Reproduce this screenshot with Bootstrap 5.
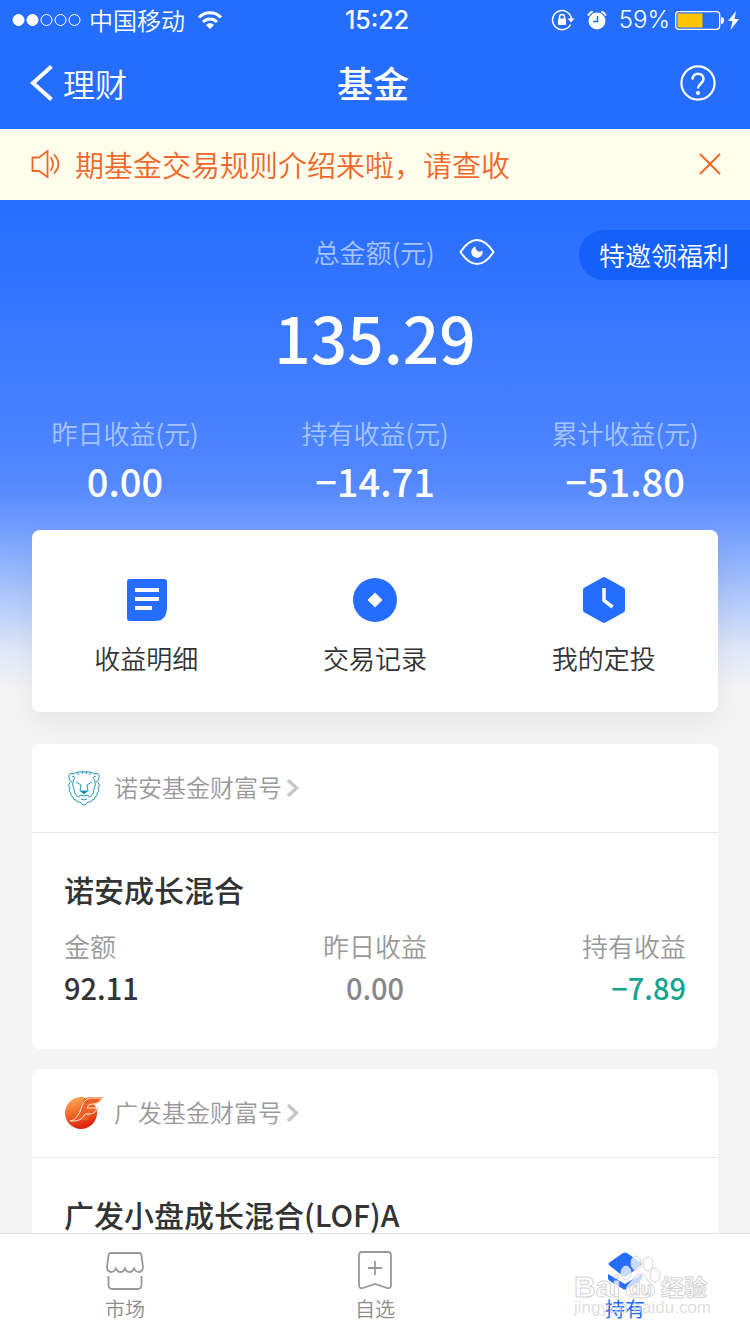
<!DOCTYPE html>
<html lang="zh-CN">
<head>
<meta charset="utf-8">
<meta name="viewport" content="width=device-width, initial-scale=1">
<title>基金</title>
<link href="https://cdn.jsdelivr.net/npm/bootstrap@5.3.0/dist/css/bootstrap.min.css" rel="stylesheet">
<style>
  :root { --brand: #256dff; --ink: #333; --muted: #999; --notice: #f0692a; }
  body { font-family: "Noto Sans CJK SC", sans-serif; font-size: 26px; line-height: 36px; color: var(--ink); background: #f4f4f4; }
  button { font-family: inherit; }
  a { text-decoration: none; color: inherit; }
  svg { display: block; flex: none; }
  .bg-brand { background: var(--brand); }
  .light-face { font-weight: 350; }
  .status-bar { height: 40px; font-size: 24px; }
  .status-bar .clock, .status-bar .charge { font-family: Inter, sans-serif; }
  .status-bar .clock { font-size: 25px; }
  .side { flex: 1 1 0; }
  .title-bar { height: 89px; padding: 0 33px 4px 29px; }
  .title-bar .back { font-size: 32px; }
  .title-bar h1 { font-size: 36px; font-weight: 500; }
  .notice { height: 71px; padding: 0 28px 2px 31px; background: #fffdec; color: var(--notice); font-size: 29px; }
  .scroller { scrollbar-width: none; background: linear-gradient(#266eff 0, #3475ff 100px, #447fff 200px, #5287ff 280px, #6c99ff 320px, #a9c3fb 390px, #dfe7f8 450px, #f4f4f4 490px) no-repeat; }
  .scroller::-webkit-scrollbar { display: none; }
  .total { padding: 34px 0 0 58px; }
  .dim { color: #a6c4ff; }
  .invite { top: 30px; right: 0; height: 50px; padding: 0 21px 0 20px; border-radius: 25px 0 0 25px; background: #1560fb; font-size: 26px; line-height: 46px; }
  .amount { font-size: 64px; line-height: 72px; font-weight: 500; margin-top: 30px; }
  .stats { padding-top: 43px; }
  .stats dd { font-size: 38px; line-height: 44px; font-weight: 500; margin-top: 8px; }
  .panel { background: #fff; border-radius: 8px; margin: 0 32px 20px; }
  .shortcuts { margin-top: 27px; margin-bottom: 32px; padding: 44px 0 34px; box-shadow: 0 10px 30px rgba(0,0,0,.06); }
  .shortcuts a { gap: 14px; padding-bottom: 2px; }
  .fund-head { height: 89px; padding: 0 32px; border-bottom: 1px solid #e8e8e8; font-size: 24px; line-height: 30px; color: var(--muted); }
  .fund-head span { padding: 0 0 2px 2px; }
  .fund-body { padding: 36px 32px 42px; }
  .fund-body h2 { font-size: 30px; line-height: 40px; font-weight: 500; }
  .fund-body dt { color: var(--muted); margin-top: 19px; }
  .fund-body dd { font-size: 29px; line-height: 40px; font-weight: 500; margin-top: 3px; }
  .flat { color: #888; }
  .loss { color: #15a48b; }
  .tab-bar { height: 101px; background: #fff; border-top: 1px solid #e2e2e2; font-size: 20px; line-height: 26px; color: #8c8c8c; }
  .tab-bar a { padding-top: 16px; gap: 6px; }
  .tab-bar .current { color: var(--brand); }
  .stamp { right: 36px; top: 16px; width: 140px; pointer-events: none; }
</style>
</head>
<body>
<div class="d-flex flex-column vh-100 overflow-hidden">
  <header class="bg-brand text-white flex-shrink-0">
    <div class="status-bar d-flex align-items-center ps-2 pe-2">
      <div class="side d-flex align-items-center gap-2 ps-1">
        <svg width="69" height="14" viewBox="0 0 69 14" fill="none" stroke="#fff"><g fill="#fff"><circle cx="6.500" cy="7" r="5.500"/><circle cx="20.500" cy="7" r="5.500"/></g><circle cx="34.500" cy="7" r="5.500"/><circle cx="48.500" cy="7" r="5.500"/><circle cx="62.500" cy="7" r="5.500"/></svg>
        <span class="light-face">中国移动</span>
        <svg class="ms-1" width="26" height="20" viewBox="0 0 26 20" fill="none" stroke="#fff" stroke-width="3"><path d="M2 7.500C8 1 18 1 24 7.500"/><path d="M6 12c4-4 10-4 14 0"/><path d="M9 15c2.300-2.200 5.700-2.200 8 0l-4 4z" fill="#fff" stroke="none"/></svg>
      </div>
      <span class="clock fw-medium">15:22</span>
      <div class="side d-flex align-items-center justify-content-end">
        <svg width="24" height="22" viewBox="0 0 24 22" fill="none" stroke="#fff" stroke-width="1.500"><path d="M19.500 15.500A9.500 9.500 0 1 1 20.500 10"/><path d="M16.500 9.500h7l-3.500 4z" fill="#fff" stroke="none"/><rect x="7" y="9.500" width="8" height="6.500" rx="1" fill="#fff" stroke="none"/><path d="M8.500 10V8a2.500 2.500 0 0 1 5 0v2"/></svg>
        <svg class="ms-2 me-2" width="28" height="22" viewBox="0 0 28 22"><circle cx="14" cy="12" r="8.500" fill="#fff"/><path d="M5.500 6q1-2.500 3.500-3M22.500 6q-1-2.500-3.500-3" fill="none" stroke="#fff" stroke-width="2" stroke-linecap="round"/><path d="M14.500 7v5.500H10" fill="none" stroke="#256dff" stroke-width="1.500"/></svg>
        <span class="charge light-face me-1">59%</span>
        <svg width="68" height="22" viewBox="0 0 68 22"><rect x="1.700" y="2.700" width="44" height="17.600" rx="3" fill="none" stroke="#fff" stroke-width="1.300"/><rect x="3.500" y="4.500" width="25" height="14" fill="#ffc400"/><path d="M47 8q3 0 3 3.500T47 15z" fill="#fff"/><path d="M62 2l-8 10h4.500L56.500 21l8.500-11h-4.500z" fill="#fff"/></svg>
      </div>
    </div>
    <div class="title-bar d-flex align-items-center">
      <a class="back side d-flex align-items-center gap-2 light-face" href="#"><svg width="26" height="36" viewBox="0 0 26 36" fill="none" stroke="#fff" stroke-width="4"><path d="M22.500 1.500L4 18l18.500 16.500"/></svg><span>理财</span></a>
      <h1 class="m-0">基金</h1>
      <div class="side d-flex justify-content-end">
        <button class="btn p-0 border-0" type="button" aria-label="帮助"><svg width="38" height="38" viewBox="0 0 38 38" fill="none" stroke="#fff" stroke-width="2.200"><circle cx="19" cy="19" r="16.600"/><path d="M13.500 15.500c0-8 11-7.500 11-.500 0 4.500-5.500 4.500-5.500 9.500" stroke-width="2.500"/><circle cx="19" cy="29" r="2" fill="#fff" stroke="none"/></svg></button>
      </div>
    </div>
  </header>

  <div class="notice d-flex align-items-center flex-shrink-0" role="alert">
    <svg width="32" height="30" viewBox="0 0 32 30" fill="none" stroke="#f0692a" stroke-width="1.800"><path d="M1.500 8.500H8L16.500 2v26L8 22H1.500z"/><path d="M20 9q4 6 0 12M23.500 6q8 9 0 18" stroke-linecap="round"/></svg>
    <span class="light-face flex-grow-1 ms-2 ps-1">期基金交易规则介绍来啦，请查收</span>
    <button class="btn p-0 border-0" type="button" aria-label="关闭"><svg width="24" height="24" viewBox="0 0 24 24" stroke="#f0692a" stroke-width="2"><path d="M2 2l20 20M22 2L2 22"/></svg></button>
  </div>

  <main class="scroller flex-grow-1 overflow-auto">
    <section class="position-relative text-white text-center">
      <div class="total d-flex justify-content-center align-items-center light-face">
        <span class="dim">总金额(元)</span>
        <button class="btn p-0 border-0 ms-3" type="button" aria-label="显示金额"><svg class="ms-2" width="36" height="28" viewBox="0 0 36 28"><path d="M1.500 14C12-2 24-2 34.500 14 24 30 12 30 1.500 14z" fill="none" stroke="#fff" stroke-width="2"/><path d="M16.500 8.500a5.700 5.700 0 1 0 7 4q-2.500 2-5 .500-2.500-2-2-4.500z" fill="#fff"/></svg></button>
      </div>
      <button class="invite btn border-0 text-white position-absolute light-face" type="button">特邀领福利</button>
      <p class="amount mb-0">135.29</p>
      <div class="stats row g-0">
        <dl class="col-4 m-0"><dt class="dim light-face">昨日收益(元)</dt><dd class="mb-0">0.00</dd></dl>
        <dl class="col-4 m-0"><dt class="dim light-face">持有收益(元)</dt><dd class="mb-0">−14.71</dd></dl>
        <dl class="col-4 m-0"><dt class="dim light-face">累计收益(元)</dt><dd class="mb-0">−51.80</dd></dl>
      </div>
    </section>

    <nav class="panel shortcuts row g-0" aria-label="快捷入口">
      <a class="col-4 d-flex flex-column align-items-center light-face" href="#"><svg width="52" height="52" viewBox="0 0 52 52"><path d="M10 5h34q3 0 3 3v25q0 14-12 14H10q-3 0-3-3V8q0-3 3-3z" fill="#256dff"/><path d="M15 16h24M15 25h24M15 34h17" stroke="#fff" stroke-width="4"/></svg><span>收益明细</span></a>
      <a class="col-4 d-flex flex-column align-items-center light-face" href="#"><svg width="52" height="52" viewBox="0 0 52 52"><circle cx="26" cy="26" r="22" fill="#256dff"/><path d="M26 18.500l7.500 7.500-7.500 7.500-7.500-7.500z" fill="#fff"/></svg><span>交易记录</span></a>
      <a class="col-4 d-flex flex-column align-items-center light-face" href="#"><svg width="52" height="52" viewBox="0 0 52 52"><path d="M26 6l18 10v20L26 46 8 36V16z" fill="#256dff" stroke="#256dff" stroke-width="6" stroke-linejoin="round"/><path d="M26 14v12.500l8.500 6.500" fill="none" stroke="#fff" stroke-width="3.500"/></svg><span>我的定投</span></a>
    </nav>

    <article class="panel">
      <a class="fund-head d-flex align-items-center light-face" href="#">
        <svg width="40" height="40" viewBox="0 0 40 40" fill="none" stroke="#2299bd" stroke-width="1"><path d="M9 6Q4 4 5 10q0 3 3 4M31 6q5-2 4 4 0 3-3 4"/><path d="M9 6q4-3 11-2 7-1 11 2M13 4l2 3M18 3l1 3M23 3l-1 3M27 4l-2 3M8 9l2-1M32 9l-2-1"/><path d="M6 14q-3 4 0 6-2 3 1 5-1 3 2 4 0 3 3 3 1 3 4 2 2 3 4 3 2 0 4-3 3 1 4-2 3 0 3-3 3-1 2-4 3-2 1-5 3-2 0-6"/><path d="M11 9q-4 6-1 12 0 5 4 8M29 9q4 6 1 12 0 5-4 8M12 14l5 3M28 14l-5 3M17 17l-1 6 4 2 4-2-1-6"/><path d="M17 23h6l-3 3z" fill="#0079ae"/><path d="M14 29l3-2 3 1 3-1 3 2M17 31l3 1 3-1"/></svg>
        <span class="ms-2">诺安基金财富号</span>
        <svg class="ms-1" width="14" height="20" viewBox="0 0 14 20" fill="none" stroke="#c7c7cc" stroke-width="3.500"><path d="M2 2l8.500 8L2 18"/></svg>
      </a>
      <div class="fund-body">
        <h2 class="m-0">诺安成长混合</h2>
        <div class="row g-0">
          <dl class="col-4 m-0"><dt class="light-face">金额</dt><dd class="mb-0">92.11</dd></dl>
          <dl class="col-4 m-0 text-center"><dt class="light-face">昨日收益</dt><dd class="mb-0 flat">0.00</dd></dl>
          <dl class="col-4 m-0 text-end"><dt class="light-face">持有收益</dt><dd class="mb-0 loss">−7.89</dd></dl>
        </div>
      </div>
    </article>

    <article class="panel">
      <a class="fund-head d-flex align-items-center light-face" href="#">
        <svg width="40" height="40" viewBox="0 0 40 40"><defs><linearGradient id="ember" x2="0.300" y2="1"><stop stop-color="#ffb561"/><stop offset=".55" stop-color="#f06a28"/><stop offset="1" stop-color="#dd2611"/></linearGradient></defs><circle cx="17" cy="20" r="16" fill="url(#ember)"/><path d="M39 4H25q-6 1-8 9l-3 14h10l3-6q6 0 7-6h-5l1-4q6 0 9-7z" fill="#ee6325"/><path d="M38 5H27q-6 0-9 8-4 14-12 15 12 1 15-7h5q5 0 7-6H23q1-4 5-4h2q5 0 8-6" fill="none" stroke="#ffe9dc" stroke-width="1"/></svg>
        <span class="ms-2">广发基金财富号</span>
        <svg class="ms-1" width="14" height="20" viewBox="0 0 14 20" fill="none" stroke="#c7c7cc" stroke-width="3.500"><path d="M2 2l8.500 8L2 18"/></svg>
      </a>
      <div class="fund-body">
        <h2 class="m-0">广发小盘成长混合(LOF)A</h2>
      </div>
    </article>
  </main>

  <nav class="tab-bar d-flex flex-shrink-0 position-relative" aria-label="主导航">
    <a class="side d-flex flex-column align-items-center light-face" href="#"><svg width="40" height="40" viewBox="0 0 40 40" fill="none" stroke="#999" stroke-width="1.800"><path d="M6 3h28q2 0 2.400 2L38 17q0 5-4.500 5-3 0-4.500-4-1 4-4.500 4T20 18q-1 4-4.500 4T11 18q-1.500 4-4.500 4Q2 22 2 17L3.600 5Q4 3 6 3zM3.500 26v9q0 4 4 4h25q4 0 4-4v-9" stroke-linejoin="round"/></svg><span>市场</span></a>
    <a class="side d-flex flex-column align-items-center light-face" href="#"><svg width="40" height="40" viewBox="0 0 40 40" fill="none" stroke="#999" stroke-width="1.800"><path d="M7 2h26q3 0 3 3v30q0 4-4 3l-12-4-12 4q-4 1-4-3V5q0-3 3-3zM20 11v14M13 18h14"/></svg><span>自选</span></a>
    <a class="side current d-flex flex-column align-items-center" href="#" aria-current="page"><svg width="40" height="40" viewBox="0 0 40 40" fill="#256dff"><path d="M18 3q2-1 4 0l13 9q3 2 0 4l-13 10q-2 1-4 0L5 16q-3-2 0-4z"/><path d="M3 24l17 10 17-10v4q0 2-2 3L22 39q-2 1-4 0L5 31q-2-1-2-3z"/></svg><span>持有</span></a>
    <svg class="stamp position-absolute" height="70" viewBox="0 0 140 70" fill="#fff" fill-opacity=".75" stroke="#d4d4d4" font-family="Liberation Sans, Noto Sans CJK SC, sans-serif" font-weight="700" aria-hidden="true">
      <ellipse cx="62" cy="13" rx="5" ry="7"/><ellipse cx="74" cy="14" rx="5" ry="7"/><ellipse cx="52" cy="23" rx="5" ry="7"/><ellipse cx="81" cy="25" rx="5" ry="7"/>
      <path d="M66 24q5 0 8 7 9 6 6 13-3 4-14 4-11 0-13-4-3-7 5-13 3-7 8-7z"/>
      <text x="0" y="47" font-size="30">Bai</text><text x="55" y="45" font-size="19">du</text><text x="87" y="46" font-size="23">经验</text>
      <text x="0" y="63" font-size="17" font-weight="400" stroke="none" fill="#d4d4d4">jingyan.baidu.com</text>
    </svg>
  </nav>
</div>
<script src="https://cdn.jsdelivr.net/npm/bootstrap@5.3.0/dist/js/bootstrap.bundle.min.js"></script>
</body>
</html>
